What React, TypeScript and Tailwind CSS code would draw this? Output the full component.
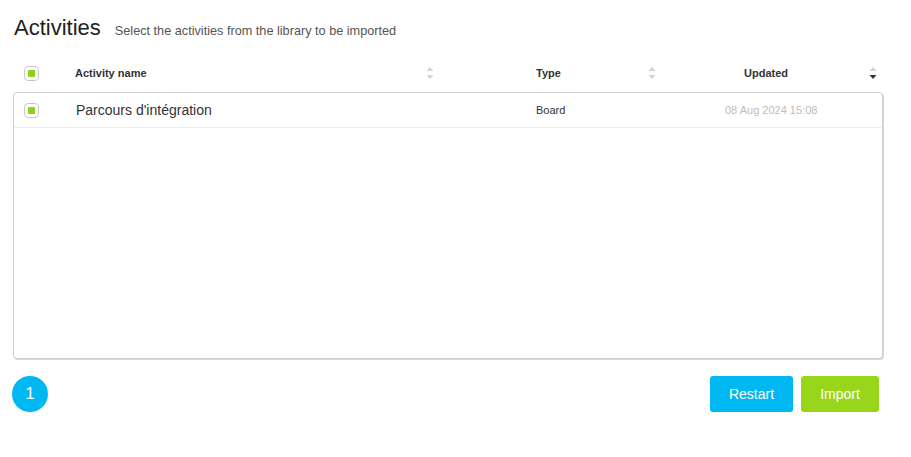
import React from "react";

type SortDir = "none" | "desc";

const SortIcon = ({ dir = "none" }: { dir?: SortDir }) => (
  <svg width="8" height="14" viewBox="0 0 8 14" className="shrink-0">
    <path d="M4 1 L7.5 5 L0.5 5 Z" fill="#d4d4d4" />
    <path d="M0.5 9 L7.5 9 L4 13 Z" fill={dir === "desc" ? "#333333" : "#d4d4d4"} />
  </svg>
);

const Check = () => (
  <span className="flex h-[15px] w-[15px] items-center justify-center rounded-[4px] border border-[#c8c8c8] bg-white">
    <span className="h-[7px] w-[7px] rounded-[1px] bg-[#8fd118]" />
  </span>
);

const activities = [
  { name: "Parcours d'intégration", type: "Board", updated: "08 Aug 2024 15:08" },
];

export default function App() {
  return (
    <div className="h-[457px] w-[911px] bg-white px-[13px] pt-[14px] font-['Liberation_Sans',Arial,sans-serif] text-[#333]">
      <div className="flex items-baseline gap-[14px] pl-px">
        <h1 className="text-[22px] leading-[28px] text-[#222]">Activities</h1>
        <p className="text-[12.7px] text-[#555]">Select the activities from the library to be imported</p>
      </div>

      <div className="mt-[16px] flex h-[30px] w-[870px] items-center text-[11px] font-bold">
        <div className="w-[62px] pl-[11px]">
          <Check />
        </div>
        <div className="flex w-[360px] items-center justify-between pr-[1px]">
          <span>Activity name</span>
          <SortIcon />
        </div>
        <div className="flex w-[221px] items-center justify-between pl-[101px]">
          <span>Type</span>
          <SortIcon />
        </div>
        <div className="flex flex-1 items-center justify-between pl-[88px] pr-[6px]">
          <span>Updated</span>
          <SortIcon dir="desc" />
        </div>
      </div>

      <div className="mt-[4px] h-[267px] w-[870px] rounded-[4px] border border-[#cfcfcf] bg-white shadow-[1px_1px_0_#d8d8d8]">
        {activities.map((a) => (
          <div key={a.name} className="flex h-[35px] items-center border-b border-[#eeeeee]">
            <div className="w-[62px] pl-[10px]">
              <Check />
            </div>
            <div className="w-[460px] text-[14px]">{a.name}</div>
            <div className="w-[189px] text-[11px]">{a.type}</div>
            <div className="text-[11px] text-[#bdbdbd]">{a.updated}</div>
          </div>
        ))}
      </div>

      <div className="mt-[17px] flex w-[866px] items-center justify-between">
        <span className="-ml-px flex h-[36px] w-[36px] items-center justify-center rounded-full bg-[#00b8f1] text-[17px] text-white">
          1
        </span>
        <div className="flex gap-[8px]">
          <button className="h-[36px] w-[83px] rounded-[3px] bg-[#00b8f1] text-[14px] text-white">Restart</button>
          <button className="h-[36px] w-[78px] rounded-[3px] bg-[#98d61b] text-[14px] text-white">Import</button>
        </div>
      </div>
    </div>
  );
}
